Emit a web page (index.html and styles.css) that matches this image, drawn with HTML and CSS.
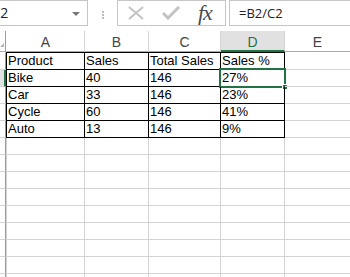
FILE: index.html
```html
<!DOCTYPE html>
<html lang="en">
<head>
  <meta charset="UTF-8">
  <title>Sales %</title>
  <link rel="stylesheet" href="styles.css">
</head>
<body>
  <div class="formula-bar">
    <div class="name-box">
      <span class="name-text">D2</span>
      <span class="name-arrow"></span>
    </div>
    <div class="grip"><i></i><i></i><i></i></div>
    <div class="fx-group">
      <svg class="icon-x" width="16" height="14" viewBox="0 0 16 14">
        <path d="M1 1 L15 13 M15 1 L1 13" stroke="#c3c3c3" stroke-width="2" fill="none"/>
      </svg>
      <svg class="icon-check" width="18" height="14" viewBox="0 0 18 14">
        <path d="M1 7 L6 12 L17 1" stroke="#c3c3c3" stroke-width="3" fill="none"/>
      </svg>
      <span class="icon-fx">fx</span>
    </div>
    <div class="formula-input">=B2/C2</div>
  </div>

  <div class="sheet">
    <!-- column headers -->
    <div class="corner"><span class="corner-tri"></span></div>
    <div class="colhead col-a">A</div>
    <div class="colhead">B</div>
    <div class="colhead">C</div>
    <div class="colhead active">D</div>
    <div class="colhead col-e">E</div>

    <!-- row 1 -->
    <div class="rowhead first"></div>
    <div class="cell data col-a first">Product</div>
    <div class="cell data first">Sales</div>
    <div class="cell data first">Total Sales</div>
    <div class="cell data first">Sales %</div>
    <div class="cell col-e first"></div>

    <!-- row 2 -->
    <div class="rowhead active"></div>
    <div class="cell data col-a">Bike</div>
    <div class="cell data">40</div>
    <div class="cell data">146</div>
    <div class="cell data selected">27%<span class="sel-box"></span><span class="sel-handle"></span></div>
    <div class="cell col-e"></div>

    <div class="rowhead"></div>
    <div class="cell data col-a">Car</div>
    <div class="cell data">33</div>
    <div class="cell data">146</div>
    <div class="cell data">23%</div>
    <div class="cell col-e"></div>

    <div class="rowhead"></div>
    <div class="cell data col-a">Cycle</div>
    <div class="cell data">60</div>
    <div class="cell data">146</div>
    <div class="cell data">41%</div>
    <div class="cell col-e"></div>

    <div class="rowhead"></div>
    <div class="cell data col-a">Auto</div>
    <div class="cell data">13</div>
    <div class="cell data">146</div>
    <div class="cell data">9%</div>
    <div class="cell col-e"></div>

    <div class="rowhead"></div><div class="cell col-a"></div><div class="cell"></div><div class="cell"></div><div class="cell"></div><div class="cell col-e"></div>
    <div class="rowhead"></div><div class="cell col-a"></div><div class="cell"></div><div class="cell"></div><div class="cell"></div><div class="cell col-e"></div>
    <div class="rowhead"></div><div class="cell col-a"></div><div class="cell"></div><div class="cell"></div><div class="cell"></div><div class="cell col-e"></div>
    <div class="rowhead"></div><div class="cell col-a"></div><div class="cell"></div><div class="cell"></div><div class="cell"></div><div class="cell col-e"></div>
    <div class="rowhead"></div><div class="cell col-a"></div><div class="cell"></div><div class="cell"></div><div class="cell"></div><div class="cell col-e"></div>
    <div class="rowhead"></div><div class="cell col-a"></div><div class="cell"></div><div class="cell"></div><div class="cell"></div><div class="cell col-e"></div>
    <div class="rowhead"></div><div class="cell col-a"></div><div class="cell"></div><div class="cell"></div><div class="cell"></div><div class="cell col-e"></div>
    <div class="rowhead"></div><div class="cell col-a"></div><div class="cell"></div><div class="cell"></div><div class="cell"></div><div class="cell col-e"></div>
    <div class="rowhead"></div><div class="cell col-a"></div><div class="cell"></div><div class="cell"></div><div class="cell"></div><div class="cell col-e"></div>
  </div>
</body>
</html>
```

FILE: styles.css
```css
* {
  box-sizing: border-box;
}
body {
  margin: 0;
  background: #ffffff;
  font-family: "Liberation Sans", Arial, sans-serif;
  overflow: hidden;
  width: 350px;
  height: 277px;
}

/* formula bar */
.formula-bar {
  display: flex;
  height: 26px;
  margin-bottom: 5px;
}
.name-box {
  position: relative;
  margin-left: -17px;
  width: 105px;
  height: 26px;
  border: 1px solid #c6c6c6;
  font-family: "Open Sans", sans-serif;
  font-size: 14px;
  color: #222;
  padding: 2px 0 0 6px;
}
.name-arrow {
  position: absolute;
  right: 7px;
  top: 11px;
  border-left: 4px solid transparent;
  border-right: 4px solid transparent;
  border-top: 4px solid #777;
}
.grip {
  width: 29px;
  display: flex;
  flex-direction: column;
  align-items: center;
  gap: 1px;
  padding-top: 11px;
}
.grip i {
  width: 2px;
  height: 2px;
  background: #bdbdbd;
}
.fx-group {
  width: 109px;
  height: 26px;
  border: 1px solid #c6c6c6;
  display: flex;
  align-items: center;
  padding-left: 10px;
}
.icon-check {
  margin-left: 18px;
}
.icon-fx {
  margin-left: 18px;
  font-family: "Liberation Serif", serif;
  font-style: italic;
  font-size: 22px;
  color: #4a4a4a;
  letter-spacing: -1px;
}
.formula-input {
  flex: 1;
  margin-left: 3px;
  height: 26px;
  border: 1px solid #c6c6c6;
  border-right: none;
  font-family: "Open Sans", sans-serif;
  font-size: 13px;
  color: #222;
  padding: 3px 0 0 9px;
}

/* sheet grid */
.sheet {
  display: grid;
  grid-template-columns: 6px 79px 64px 72px 64px 1fr;
  grid-auto-rows: 17px;
  grid-template-rows: 21px 18px;
  font-size: 13px;
  line-height: 16px;
  color: #000;
}
.corner {
  position: relative;
  border-right: 1px solid #9b9b9b;
  border-bottom: 1px solid #ababab;
}
.corner-tri {
  position: absolute;
  right: 1px;
  bottom: 4px;
  border-left: 4px solid transparent;
  border-bottom: 4px solid #b4b4b4;
}
.colhead {
  display: flex;
  align-items: center;
  justify-content: center;
  padding-top: 2px;
  color: #444;
  font-size: 14px;
  border-right: 1px solid #d4d4d4;
  border-bottom: 1px solid #ababab;
}
.colhead.col-a {
  border-left: 1px solid #ffffff;
}
.colhead.col-e {
  border-right: none;
}
.colhead.active {
  background: #e1e1e1;
  color: #217346;
  border-bottom: 2px solid #217346;
}
.rowhead {
  border-right: 1px solid #9b9b9b;
  border-bottom: 1px solid #d4d4d4;
}
.rowhead.first {
  border-top: 1px solid #ffffff;
}
.rowhead.active {
  background: #e1e1e1;
  border-right: 2px solid #217346;
}
.cell {
  position: relative;
  padding-left: 1px;
  white-space: nowrap;
  border-right: 1px solid #d4d4d4;
  border-bottom: 1px solid #d4d4d4;
}
.cell.col-a {
  border-left: 1px solid #d4d4d4;
}
.cell.col-e {
  border-right: none;
}
.cell.first {
  border-top: 1px solid #ffffff;
}
.cell.data {
  border-right-color: #000;
  border-bottom-color: #000;
}
.cell.data.col-a {
  border-left-color: #000;
}
.cell.data.first {
  border-top-color: #000;
}
.sel-box {
  position: absolute;
  left: -2px;
  top: -2px;
  width: 67px;
  height: 20px;
  border: 2px solid #217346;
}
.sel-handle {
  position: absolute;
  left: 61px;
  top: 14px;
  width: 6px;
  height: 6px;
  background: #217346;
  border: 1px solid #ffffff;
}
```
